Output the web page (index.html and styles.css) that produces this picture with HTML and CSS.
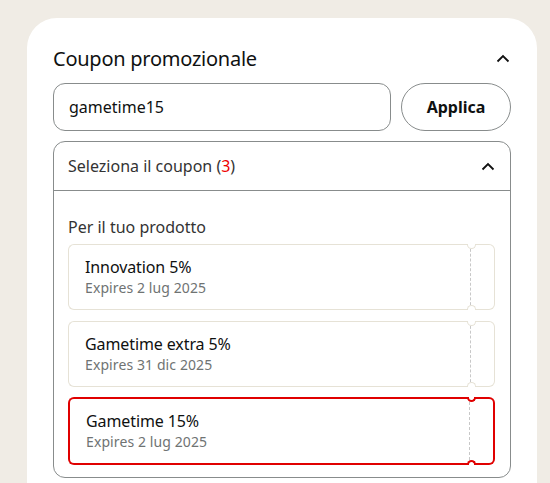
FILE: index.html
```html
<!DOCTYPE html>
<html lang="it">
<head>
<meta charset="utf-8">
<link rel="stylesheet" href="styles.css">
</head>
<body>
<div class="card">
  <div class="title-row">
    <h2 class="title">Coupon promozionale</h2>
    <svg class="chev chev-title" width="14" height="9" viewBox="0 0 14 9"><path d="M1.5 7.5 L7 2 L12.5 7.5" fill="none" stroke="#111" stroke-width="1.8"/></svg>
  </div>
  <div class="code-row">
    <div class="code-input">gametime15</div>
    <button class="apply">Applica</button>
  </div>
  <div class="select">
    <div class="select-head">
      <span>Seleziona il coupon (<span class="count">3</span>)</span>
      <svg class="chev" width="14" height="9" viewBox="0 0 14 9"><path d="M1.5 7.5 L7 2 L12.5 7.5" fill="none" stroke="#111" stroke-width="1.8"/></svg>
    </div>
    <div class="select-body">
      <div class="section-label">Per il tuo prodotto</div>
      <div class="coupon">
        <div class="coupon-main">
          <div class="coupon-name">Innovation 5%</div>
          <div class="coupon-exp">Expires 2 lug 2025</div>
        </div>
        <div class="coupon-stub"></div>
        <span class="notch notch-top"></span>
        <span class="notch notch-bottom"></span>
      </div>
      <div class="coupon">
        <div class="coupon-main">
          <div class="coupon-name">Gametime extra 5%</div>
          <div class="coupon-exp">Expires 31 dic 2025</div>
        </div>
        <div class="coupon-stub"></div>
        <span class="notch notch-top"></span>
        <span class="notch notch-bottom"></span>
      </div>
      <div class="coupon selected">
        <div class="coupon-main">
          <div class="coupon-name">Gametime 15%</div>
          <div class="coupon-exp">Expires 2 lug 2025</div>
        </div>
        <div class="coupon-stub"></div>
        <span class="notch notch-top"></span>
        <span class="notch notch-bottom"></span>
      </div>
    </div>
  </div>
</div>
</body>
</html>
```
FILE: styles.css
```css
html, body {
  margin: 0;
  padding: 0;
  background: #f0ece5;
  height: 483px;
  overflow: hidden;
  font-family: "Noto Sans", "Liberation Sans", sans-serif;
  color: #0f1111;
}
.card {
  margin: 18px 13px 0 27px;
  background: #fff;
  border-radius: 30px 30px 0 0;
  padding: 26px 26px 0 26px;
  height: 465px;
  box-sizing: border-box;
  overflow: hidden;
}
.title-row {
  display: flex;
  align-items: center;
  justify-content: space-between;
  height: 29px;
}
.title {
  margin: 0;
  font-size: 20px;
  font-weight: 400;
  letter-spacing: -0.25px;
}
.chev-title { margin-right: 1px; }
.code-row {
  display: flex;
  gap: 10px;
  margin-top: 10px;
}
.code-input {
  flex: 1;
  height: 48px;
  box-sizing: border-box;
  border: 1px solid #888c8c;
  border-radius: 12px;
  padding: 0 15px;
  display: flex;
  align-items: center;
  font-size: 16px;
}
.apply {
  width: 110px;
  height: 48px;
  border: 1px solid #888c8c;
  border-radius: 24px;
  background: #fff;
  font-family: inherit;
  font-size: 16px;
  font-weight: 700;
  color: #0f1111;
  padding: 0;
}
.select {
  margin-top: 10px;
  border: 1px solid #888c8c;
  border-radius: 12px;
  height: 337px;
  box-sizing: border-box;
}
.select-head {
  height: 49px;
  box-sizing: border-box;
  border-bottom: 1px solid #888c8c;
  display: flex;
  align-items: center;
  justify-content: space-between;
  padding: 0 15px 0 14px;
  font-size: 16px;
  color: #333;
}
.count { color: #e00; }
.select-body {
  padding: 25px 15px 0 14px;
}
.section-label {
  font-size: 16px;
  color: #333;
  line-height: 22px;
}
.coupon {
  position: relative;
  display: flex;
  height: 66px;
  margin-top: 11px;
  --bc: #e6e2d6;
  --bw: 1px;
}
.section-label + .coupon { margin-top: 6px; }
.coupon.selected {
  --bc: #e00000;
  --bw: 2px;
  height: 68px;
  margin-top: 10px;
}
.coupon-main {
  flex: 1;
  border: var(--bw) solid var(--bc);
  border-right: none;
  border-radius: 6px 0 0 6px;
  padding: 0 0 0 16px;
  display: flex;
  flex-direction: column;
  justify-content: center;
}
.coupon-stub {
  width: 23px;
  border: var(--bw) solid var(--bc);
  border-left: 1px dashed #c8c8c8;
  border-radius: 0 6px 6px 0;
}
.coupon-name {
  font-size: 16px;
  line-height: 22px;
  color: #0f1111;
  letter-spacing: -0.1px;
}
.coupon-exp {
  font-size: 14px;
  line-height: 20px;
  color: #6f7373;
  letter-spacing: 0.1px;
}
.notch {
  position: absolute;
  right: 19px;
  width: 9px;
  height: 5px;
  box-sizing: border-box;
  background: #fff;
  border: var(--bw) solid var(--bc);
}
.notch-top {
  top: 0;
  border-top: none;
  border-radius: 0 0 5px 5px;
}
.notch-bottom {
  bottom: 0;
  border-bottom: none;
  border-radius: 5px 5px 0 0;
}
```
